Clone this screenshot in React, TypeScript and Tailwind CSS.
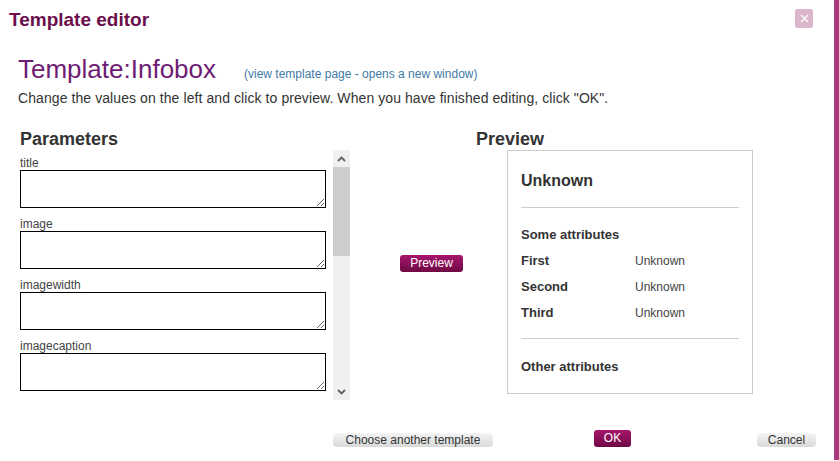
import React from 'react';

const params = ['title', 'image', 'imagewidth', 'imagecaption'];

const rows = [
  { label: 'First', value: 'Unknown' },
  { label: 'Second', value: 'Unknown' },
  { label: 'Third', value: 'Unknown' },
];

function Chevron({ down }: { down?: boolean }) {
  return (
    <svg width="9" height="6" viewBox="0 0 9 6" className="block">
      <path
        d={down ? 'M1 1 L4.5 4.5 L8 1' : 'M1 5 L4.5 1.5 L8 5'}
        fill="none"
        stroke="#606060"
        strokeWidth="1.8"
      />
    </svg>
  );
}

export default function App() {
  return (
    <div className="flex w-[839px] h-[461px] bg-white font-['Liberation_Sans',Arial,sans-serif] text-[#333] overflow-hidden">
      <div className="flex flex-col w-[834px]">
        {/* Header */}
        <div className="flex items-start pt-[9px] pl-[9px] pr-[21px]">
          <h1 className="mt-[1px] text-[19px] leading-[19px] font-bold text-[#6b0f4c]">Template editor</h1>
          <button className="ml-auto w-[18px] h-[19px] rounded-[2px] bg-[#dbb5ca] flex items-center justify-center">
            <svg width="9" height="9" viewBox="0 0 9 9">
              <path d="M1 1 L8 8 M8 1 L1 8" stroke="#fff" strokeWidth="1.4" />
            </svg>
          </button>
        </div>

        {/* Template name */}
        <div className="flex items-baseline ml-[18px] mt-[27px]">
          <h2 className="text-[26px] leading-[26px] text-[#6e1c73]">Template:Infobox</h2>
          <a className="ml-[28px] text-[12px] leading-[14px] text-[#3f7aa6]" href="#">
            (view template page - opens a new window)
          </a>
        </div>
        <p className="ml-[18px] mt-[9px] text-[14px] leading-[14px] tracking-[0.08px] text-[#333]">
          Change the values on the left and click to preview. When you have finished editing, click "OK".
        </p>

        {/* Columns */}
        <div className="flex mt-[25px]">
          {/* Parameters */}
          <div className="ml-[18px] w-[332px]">
            <h3 className="ml-[2px] text-[18px] leading-[18px] font-bold text-[#333]">Parameters</h3>
            <div className="mt-[2px] h-[250px] flex">
              <div className="w-[315px] h-full overflow-hidden pt-[6px] pl-[2px]">
                {params.map((p) => (
                  <div key={p} className="mb-[9px] last:mb-0">
                    <div className="text-[12px] leading-[14px] text-[#444]">{p}</div>
                    <textarea className="block w-[306px] h-[38px] border border-black bg-white" />
                  </div>
                ))}
              </div>
              <div className="w-[17px] h-full bg-[#f0f0f0] flex flex-col">
                <div className="h-[17px] flex items-center justify-center">
                  <Chevron />
                </div>
                <div className="h-[89px] bg-[#cdcdcd]" />
                <div className="flex-1" />
                <div className="h-[17px] flex items-center justify-center">
                  <Chevron down />
                </div>
              </div>
            </div>
          </div>

          {/* Preview action */}
          <div className="w-[126px] pl-[50px]">
            <button className="mt-[125px] w-[63px] h-[17px] rounded-[3px] bg-gradient-to-b from-[#a8166f] to-[#6f0944] text-white text-[12px] leading-[17px]">
              Preview
            </button>
          </div>

          {/* Preview */}
          <div>
            <h3 className="text-[18px] leading-[18px] font-bold text-[#333]">Preview</h3>
            <div className="mt-[2px] ml-[31px] w-[246px] h-[244px] border border-[#cccccc] px-[13px] pt-[20px]">
              <div className="text-[16px] leading-[20px] font-bold text-[#333]">Unknown</div>
              <div className="mt-[16px] h-px bg-[#cccccc]" />
              <div className="mt-[14px] text-[13px] leading-[26px] font-bold text-[#333]">Some attributes</div>
              {rows.map((r) => (
                <div key={r.label} className="flex text-[13px] leading-[26px]">
                  <span className="w-[114px] font-bold text-[#333]">{r.label}</span>
                  <span className="text-[12px] text-[#444]">{r.value}</span>
                </div>
              ))}
              <div className="mt-[12px] h-px bg-[#cccccc]" />
              <div className="mt-[15px] text-[13px] leading-[26px] font-bold text-[#333]">Other attributes</div>
            </div>
          </div>
        </div>

        {/* Footer */}
        <div className="flex items-end mt-[30px] h-[17px]">
          <button className="ml-[333px] w-[160px] h-[14px] rounded-[4px] bg-gradient-to-b from-[#f4f4f4] to-[#d9d9d9] text-[12px] leading-[14px] text-[#333]">
            Choose another template
          </button>
          <button className="ml-[101px] w-[37px] h-[17px] rounded-[3px] bg-gradient-to-b from-[#a8166f] to-[#6f0944] text-white text-[12px] leading-[17px]">
            OK
          </button>
          <button className="ml-[126px] w-[59px] h-[14px] rounded-[4px] bg-gradient-to-b from-[#f4f4f4] to-[#d9d9d9] text-[12px] leading-[14px] text-[#333]">
            Cancel
          </button>
        </div>
      </div>
      <div className="w-[5px] h-[460px] bg-[#a83b7c]" />
    </div>
  );
}
